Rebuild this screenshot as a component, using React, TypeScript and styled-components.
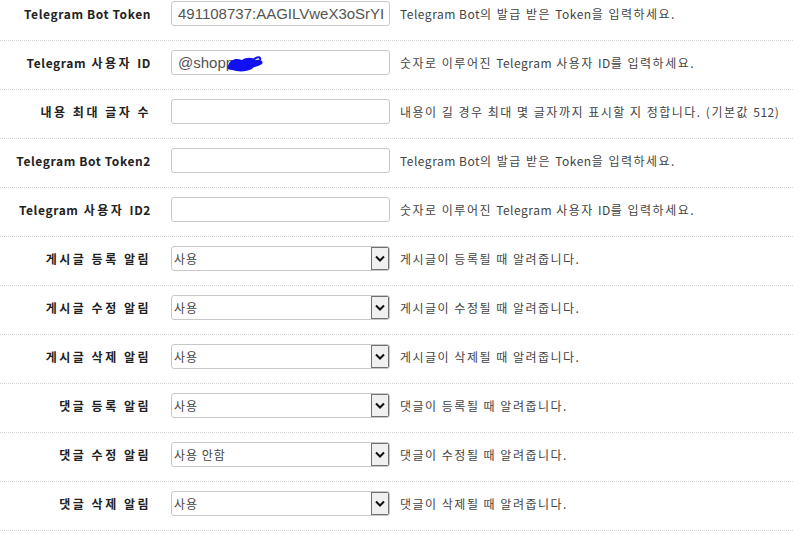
import React from "react";
import styled, { createGlobalStyle } from "styled-components";

const Global = createGlobalStyle`
  html, body { margin: 0; padding: 0; background: #fff; }
  body { font-family: "Noto Sans CJK KR", "Noto Sans", sans-serif; overflow: hidden; }
`;

const Page = styled.div`
  margin-top: -8px;
  width: 793px;
`;

const Row = styled.div`
  display: grid;
  grid-template-columns: 171px 219px auto;
  align-items: center;
  padding: 9px 0 14px;
  border-bottom: 1px dotted #d4d4d4;
`;

const Label = styled.div`
  text-align: right;
  padding-right: 20px;
  font-family: "Noto Sans CJK KR", sans-serif;
  font-weight: 700;
  font-size: 12px;
  letter-spacing: 2.5px;
  color: #222;
  white-space: nowrap;
`;

const LabelLatin = styled.span`
  letter-spacing: 0.6px;
`;

const Field = styled.div`
  position: relative;
  height: 25px;
  box-sizing: border-box;
  border: 1px solid #c8c8c8;
  border-radius: 3px;
  background: #fff;
  display: flex;
  align-items: center;
  padding-left: 6px;
  font-family: "Liberation Sans", "Noto Sans CJK KR", sans-serif;
  font-size: 15px;
  color: #555;
  overflow: hidden;
  white-space: nowrap;
`;

const SelectBox = styled.div`
  height: 25px;
  box-sizing: border-box;
  border: 1px solid #c8c8c8;
  border-radius: 3px;
  background: #fff;
  display: flex;
  align-items: stretch;
  overflow: hidden;
`;

const SelectText = styled.div`
  flex: 1;
  display: flex;
  align-items: center;
  padding-left: 2px;
  font-family: "Noto Sans CJK KR", sans-serif;
  font-size: 12px;
  color: #444;
  letter-spacing: 1px;
`;

const Arrow = styled.div`
  width: 18px;
  box-sizing: border-box;
  background: #f0f0f0;
  border: 1px solid #707070;
  display: flex;
  align-items: center;
  justify-content: center;
`;

const Help = styled.div`
  padding-left: 10px;
  font-family: "Noto Sans CJK KR", sans-serif;
  font-size: 12px;
  color: #444;
  white-space: nowrap;
  letter-spacing: 1.5px;
`;

const HelpLatin = styled.span`
  letter-spacing: 0.5px;
`;

const Scribble = styled.svg`
  position: absolute;
  left: 52px;
  top: 3px;
`;

type Item = {
  label: string;
  kind: "input" | "select";
  value?: string;
  scribble?: boolean;
  help: string;
};

const items: Item[] = [
  { label: "Telegram Bot Token", kind: "input", value: "491108737:AAGILVweX3oSrYI", help: "Telegram Bot의 발급 받은 Token을 입력하세요." },
  { label: "Telegram 사용자 ID", kind: "input", value: "@shopp", scribble: true, help: "숫자로 이루어진 Telegram 사용자 ID를 입력하세요." },
  { label: "내용 최대 글자 수", kind: "input", value: "", help: "내용이 길 경우 최대 몇 글자까지 표시할 지 정합니다. (기본값 512)" },
  { label: "Telegram Bot Token2", kind: "input", value: "", help: "Telegram Bot의 발급 받은 Token을 입력하세요." },
  { label: "Telegram 사용자 ID2", kind: "input", value: "", help: "숫자로 이루어진 Telegram 사용자 ID를 입력하세요." },
  { label: "게시글 등록 알림", kind: "select", value: "사용", help: "게시글이 등록될 때 알려줍니다." },
  { label: "게시글 수정 알림", kind: "select", value: "사용", help: "게시글이 수정될 때 알려줍니다." },
  { label: "게시글 삭제 알림", kind: "select", value: "사용", help: "게시글이 삭제될 때 알려줍니다." },
  { label: "댓글 등록 알림", kind: "select", value: "사용", help: "댓글이 등록될 때 알려줍니다." },
  { label: "댓글 수정 알림", kind: "select", value: "사용 안함", help: "댓글이 수정될 때 알려줍니다." },
  { label: "댓글 삭제 알림", kind: "select", value: "사용", help: "댓글이 삭제될 때 알려줍니다." },
];

const latinRe = /([A-Za-z0-9][A-Za-z0-9 ]*[A-Za-z0-9]|[A-Za-z0-9])/;

function mixed(text: string, Latin: typeof HelpLatin) {
  return text.split(latinRe).map((part, i) =>
    i % 2 === 1 ? <Latin key={i}>{part}</Latin> : <React.Fragment key={i}>{part}</React.Fragment>
  );
}

export default function App() {
  return (
    <>
      <Global />
      <Page>
        {items.map((it, i) => (
          <Row key={i}>
            <Label>{mixed(it.label, LabelLatin)}</Label>
            {it.kind === "input" ? (
              <Field>
                {it.value}
                {it.scribble && (
                  <Scribble width="42" height="20" viewBox="0 0 42 20">
                    <path
                      d="M4 12 C6 5 12 4 18 6 C22 3 28 3 32 6 C36 5 40 7 38 10 C34 13 30 12 28 15 C22 18 14 18 8 16 C4 16 2 14 4 12 Z"
                      fill="#1010f0"
                    />
                    <path d="M30 5 C34 2 37 3 36 6" stroke="#1010f0" strokeWidth="2" fill="none" />
                  </Scribble>
                )}
              </Field>
            ) : (
              <SelectBox>
                <SelectText>{it.value}</SelectText>
                <Arrow>
                  <svg width="10" height="7" viewBox="0 0 10 7">
                    <path d="M1 1.5 L5 5.5 L9 1.5" stroke="#111" strokeWidth="2" fill="none" />
                  </svg>
                </Arrow>
              </SelectBox>
            )}
            <Help>{mixed(it.help, HelpLatin)}</Help>
          </Row>
        ))}
      </Page>
    </>
  );
}
